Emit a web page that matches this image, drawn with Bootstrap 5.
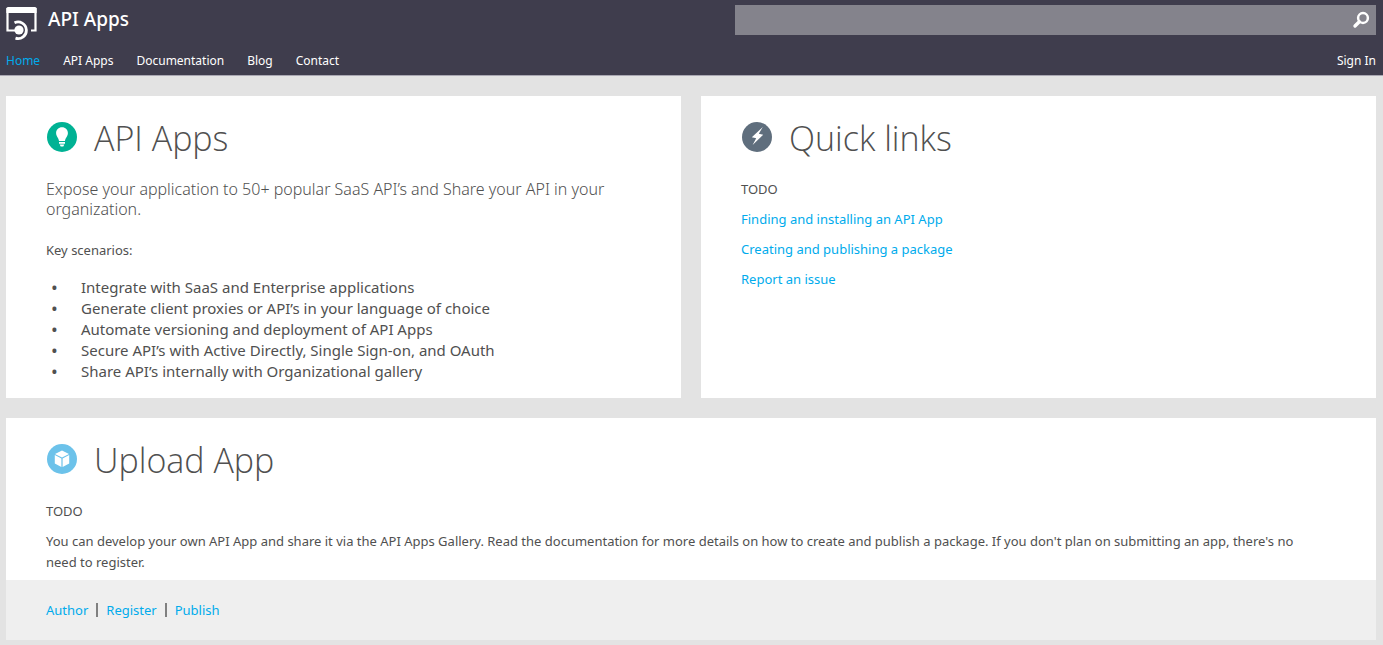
<!DOCTYPE html>
<html lang="en">
<head>
<meta charset="utf-8">
<meta name="viewport" content="width=device-width, initial-scale=1">
<title>API Apps</title>
<link href="https://cdn.jsdelivr.net/npm/bootstrap@5.3.0/dist/css/bootstrap.min.css" rel="stylesheet">
<style>
  body { background: #e3e3e3; color: #505050; font-family: "Noto Sans", "Open Sans", sans-serif; font-size: 13px; line-height: 20px; }
  a { color: #00abec; text-decoration: none; }
  a:hover { text-decoration: underline; }
  .site-header { background: #3f3d4d; border-bottom: 1px solid #a9a7b2; padding: 5px 7px 4px 6px; }
  .brand { color: #fff; font-size: 19px; font-weight: 500; line-height: 28px; gap: 11px; }
  .search { background: #84838c; height: 30px; width: 46.8%; }
  .search input { background: transparent; border: 0; color: #fff; outline: 0; padding: 0 20px; min-width: 0; }
  .search button { background: transparent; border: 0; padding: 0 6px; line-height: 0; }
  .site-nav { margin-top: 10px; gap: 0 23px; font-size: 12px; }
  .site-nav a { color: #fff; }
  .site-nav a.active { color: #00abec; }
  .page { padding: 20px 7px 5px 6px; }
  .page .row { --bs-gutter-x: 20px; --bs-gutter-y: 20px; }
  .panel { background: #fff; }
  .panel-main { padding: 20px 40px 0; }
  .panel h2 { font-family: "Open Sans", sans-serif; font-size: 34px; font-weight: 300; line-height: 44px; margin: 0 0 19px; gap: 16px; }
  .panel h2 svg { margin-bottom: 2px; }
  .intro { font-size: 16px; font-weight: 300; margin: 0 0 21px; }
  .scenarios { font-size: 15px; line-height: 21px; margin: 17px 0 0; padding: 0 0 16px; list-style: none; }
  .scenarios li { display: flex; }
  .scenarios li::before { content: "•"; flex: 0 0 35px; padding-left: 5px; font-size: 18px; }
  .stack { display: flex; flex-direction: column; align-items: flex-start; gap: 10px; }
  .stack p { margin: 0; }
  .details { line-height: 21px; padding: 0 10px 7px 0; }
  .panel-foot { background: #efefef; padding: 20px 40px; gap: 8px; }
  .bar { width: 2px; height: 14px; background: #808080; }
</style>
</head>
<body>
<header class="site-header">
  <div class="d-flex align-items-start justify-content-between">
    <a class="brand d-inline-flex align-items-start" href="#">
      <svg width="31" height="36" viewBox="0 0 31 36" aria-hidden="true">
        <path d="M9 25.500H1.500V4h28v21.500H25" fill="none" stroke="#fff" stroke-width="2.200"/>
        <path d="M.4 3.500Q.4 2 2 2h27q1.600 0 1.600 1.500V8H.4z" fill="#fff"/>
        <circle cx="13" cy="25" r="4.600" fill="#fff"/>
        <path d="M8.500 17.800A8.300 8.300 0 1 1 9.500 33.200" fill="none" stroke="#fff" stroke-width="2.800"/>
      </svg>
      <span>API Apps</span>
    </a>
    <form class="search d-flex" role="search">
      <input class="flex-fill" type="search" aria-label="Search">
      <button type="button" aria-label="Submit search">
        <svg width="18" height="18" viewBox="0 0 18 18" aria-hidden="true"><circle cx="11" cy="7" r="4.900" fill="none" stroke="#fff" stroke-width="2.500"/><path d="M7.300 10.700L3 15" stroke="#fff" stroke-width="3.400" stroke-linecap="round"/></svg>
      </button>
    </form>
  </div>
  <nav class="site-nav d-flex flex-wrap">
    <a class="active" href="#">Home</a>
    <a href="#">API Apps</a>
    <a href="#">Documentation</a>
    <a href="#">Blog</a>
    <a href="#">Contact</a>
    <a class="ms-auto" href="#">Sign In</a>
  </nav>
</header>

<main class="page">
  <div class="row">
    <div class="col-md-6">
      <section class="panel panel-main h-100">
        <h2 class="d-flex align-items-center">
          <svg width="32" height="30" viewBox="0 0 32 30" aria-hidden="true">
            <circle cx="16" cy="15" r="15" fill="#00b294"/>
            <path d="M16 5.200c-3.500 0-5.900 2.500-5.900 5.700 0 3.500 2.700 5 2.900 8.100h6c.2-3.100 2.900-4.600 2.900-8.100 0-3.200-2.400-5.700-5.900-5.700zM13 20h6v1.700h-6zM13.700 22.500h4.600l-1 1.900h-2.600z" fill="#fff"/>
          </svg>
          <span>API Apps</span>
        </h2>
        <p class="intro">Expose your application to 50+ popular SaaS API’s and Share your API in your organization.</p>
        <p class="m-0">Key scenarios:</p>
        <ul class="scenarios">
          <li>Integrate with SaaS and Enterprise applications</li>
          <li>Generate client proxies or API’s in your language of choice</li>
          <li>Automate versioning and deployment of API Apps</li>
          <li>Secure API’s with Active Directly, Single Sign-on, and OAuth</li>
          <li>Share API’s internally with Organizational gallery</li>
        </ul>
      </section>
    </div>
    <div class="col-md-6">
      <section class="panel panel-main h-100">
        <h2 class="d-flex align-items-center">
          <svg width="32" height="30" viewBox="0 0 32 30" aria-hidden="true">
            <circle cx="16" cy="15" r="15" fill="#5f6e7d"/>
            <path d="M21.800 5L10.800 15.300l4.400.9L11.600 23 22.200 12.700l-4.400-1z" fill="#fff"/>
          </svg>
          <span>Quick links</span>
        </h2>
        <div class="stack">
          <p>TODO</p>
          <a href="#">Finding and installing an API App</a>
          <a href="#">Creating and publishing a package</a>
          <a href="#">Report an issue</a>
        </div>
      </section>
    </div>
    <div class="col-12">
      <section class="panel">
        <div class="panel-main">
          <h2 class="d-flex align-items-center">
            <svg width="32" height="30" viewBox="0 0 32 30" aria-hidden="true">
              <circle cx="16" cy="15" r="15" fill="#6cc2ea"/>
              <path d="M16 6.500l7 3.400-7 3.500-7-3.500zM8.800 11.100l6.600 3.300v8.600l-6.600-3.500zM23.200 11.100l-6.600 3.300v8.600l6.600-3.500z" fill="#fff"/>
            </svg>
            <span>Upload App</span>
          </h2>
          <div class="stack">
            <p>TODO</p>
            <p class="details">You can develop your own API App and share it via the API Apps Gallery. Read the documentation for more details on how to create and publish a package. If you don't plan on submitting an app, there's no need to register.</p>
          </div>
        </div>
        <div class="panel-foot d-flex align-items-center">
          <a href="#">Author</a>
          <span class="bar"></span>
          <a href="#">Register</a>
          <span class="bar"></span>
          <a href="#">Publish</a>
        </div>
      </section>
    </div>
  </div>
</main>
<script src="https://cdn.jsdelivr.net/npm/bootstrap@5.3.0/dist/js/bootstrap.bundle.min.js"></script>
</body>
</html>
